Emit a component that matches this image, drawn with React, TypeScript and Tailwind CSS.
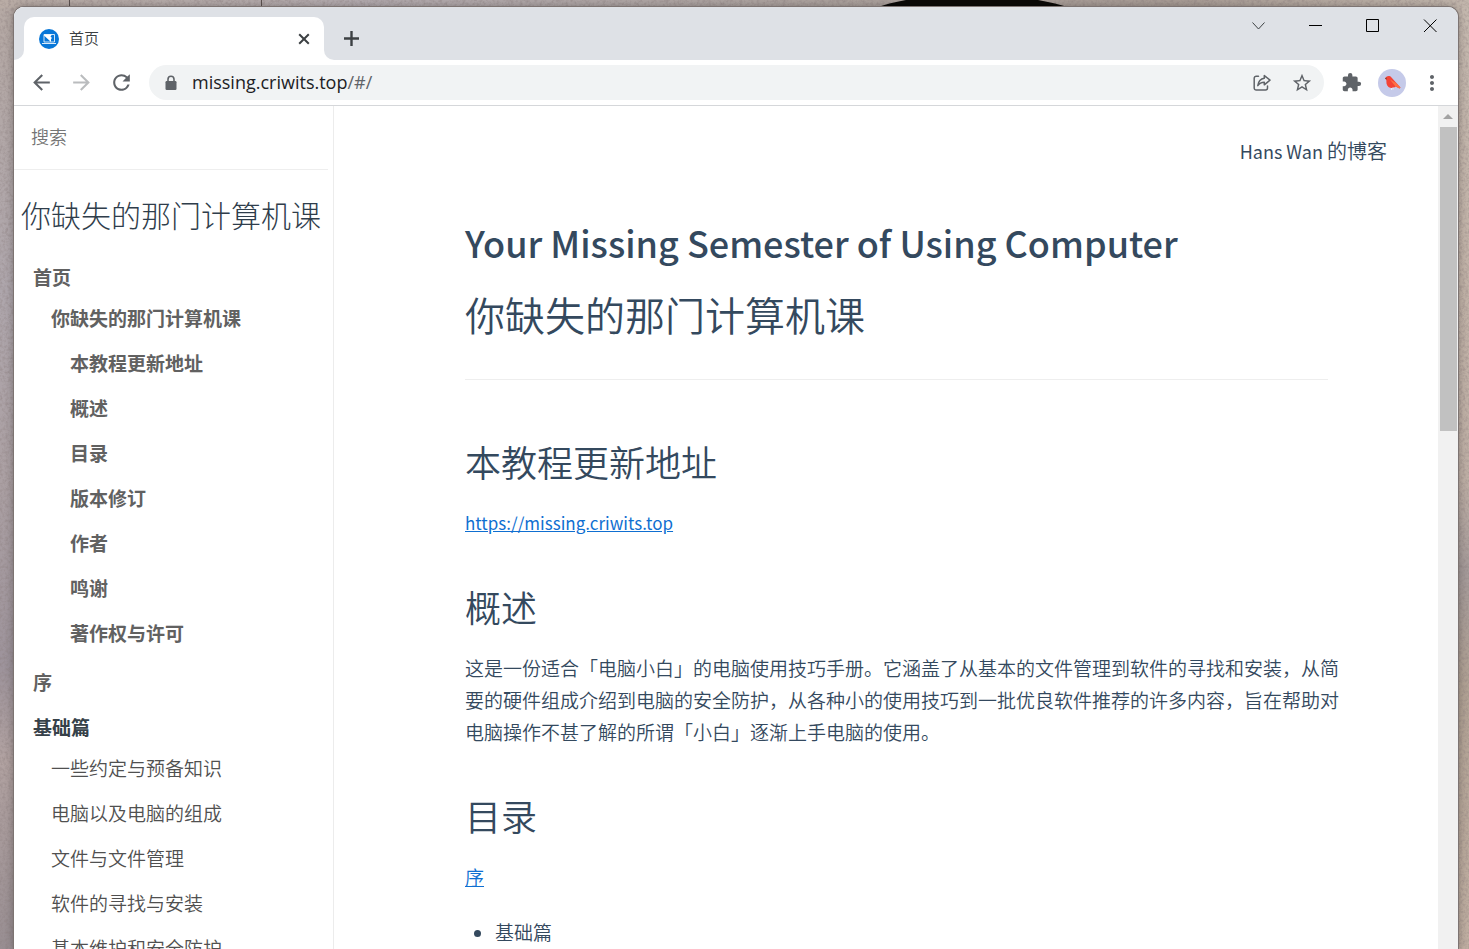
import React from "react";
import {
  MdArrowBack,
  MdArrowForward,
  MdExtension,
  MdMoreVert,
  MdRefresh,
  MdStarBorder,
} from "react-icons/md";

const homeSections = ["本教程更新地址", "概述", "目录", "版本修订", "作者", "鸣谢", "著作权与许可"];

const basics = [
  "一些约定与预备知识",
  "电脑以及电脑的组成",
  "文件与文件管理",
  "软件的寻找与安装",
  "基本维护和安全防护",
];

function Wallpaper() {
  return (
    <svg className="absolute inset-0 h-full w-full" preserveAspectRatio="none" viewBox="0 0 1469 949" aria-hidden="true">
      <defs>
        <linearGradient id="left" x1="0" y1="0" x2="0" y2="1">
          <stop offset="0" stopColor="#b5a9a4" />
          <stop offset="0.3" stopColor="#aea6ac" />
          <stop offset="0.5" stopColor="#aba0a3" />
          <stop offset="0.7" stopColor="#9d939b" />
          <stop offset="0.8" stopColor="#b1a2a1" />
          <stop offset="1" stopColor="#988e92" />
        </linearGradient>
        <linearGradient id="right" x1="0" y1="0" x2="0" y2="1">
          <stop offset="0" stopColor="#c5b9af" />
          <stop offset="0.3" stopColor="#c2b3a8" />
          <stop offset="0.5" stopColor="#beafa5" />
          <stop offset="0.6" stopColor="#a49a99" />
          <stop offset="0.72" stopColor="#b1a294" />
          <stop offset="1" stopColor="#c0afa2" />
        </linearGradient>
        <linearGradient id="top" x1="0" y1="0" x2="1" y2="0">
          <stop offset="0" stopColor="#b9aca5" />
          <stop offset="0.25" stopColor="#b3abaf" />
          <stop offset="0.55" stopColor="#ada39f" />
          <stop offset="0.8" stopColor="#a99d96" />
          <stop offset="1" stopColor="#c2b6ac" />
        </linearGradient>
        <filter id="grain" x="0" y="0" width="100%" height="100%">
          <feTurbulence type="fractalNoise" baseFrequency="0.35" numOctaves="3" seed="4" />
          <feColorMatrix values="0 0 0 0 0.25  0 0 0 0 0.2  0 0 0 0 0.2  0.9 0 0 0 -0.36" />
        </filter>
      </defs>
      <rect width="1469" height="949" fill="url(#top)" />
      <rect y="8" width="20" height="941" fill="url(#left)" />
      <rect x="1440" y="8" width="29" height="941" fill="url(#right)" />
      <rect width="1469" height="949" filter="url(#grain)" />
      <path d="M69.500 0v8M261.500 0v8" stroke="#5c5250" />
      <path d="M876 8q12-5 30-8h132q18 3 32 8z" fill="#0b0907" />
    </svg>
  );
}

function SiteIcon() {
  return (
    <svg width="20" height="20" viewBox="0 0 20 20" aria-hidden="true">
      <circle cx="10" cy="10" r="10" fill="#0877d8" />
      <path d="M5 5.500h10.500v7.500H5z" fill="none" stroke="#fff" strokeWidth="1" opacity="0.8" />
      <path d="M5 5.500h8l-1.500 2 1.500 1.500-1 1v3L5 6.500z" fill="#fff" />
      <path d="M3 14.500h14" stroke="#fff" strokeWidth="1" opacity="0.85" />
    </svg>
  );
}

function LockIcon() {
  return (
    <svg width="12" height="16" viewBox="0 0 12 16" className="shrink-0" aria-hidden="true">
      <path d="M3 7V4.300a3 3 0 0 1 6 0V7" fill="none" stroke="#5f6368" strokeWidth="1.600" />
      <rect x="0.500" y="6" width="11" height="9" rx="1.200" fill="#5f6368" />
    </svg>
  );
}

function ShareIcon() {
  return (
    <svg width="20" height="20" viewBox="0 0 20 20" fill="none" stroke="#5f6368" strokeWidth="1.500" strokeLinejoin="round" aria-hidden="true">
      <path d="M6.500 3.200H4.200A2 2 0 0 0 2.200 5.200V15a2 2 0 0 0 2 2H13.500a2 2 0 0 0 2-2v-2" strokeLinecap="round" />
      <path d="M12.300 2.500 18 7.200l-5.700 4.600V9.200C9.200 9.200 7.400 10.200 5.800 12.600 6.300 8.800 8.200 5.700 12.300 5.200Z" />
    </svg>
  );
}

function Avatar() {
  return (
    <svg width="28" height="28" viewBox="0 0 28 28" aria-hidden="true">
      <circle cx="14" cy="14" r="14" fill="#c5cae9" />
      <path d="M7 9.500C8 7 11.500 6 13.500 8.500L17.500 13 22.500 18.500 21.500 19.500 17.500 17.500C15 20 9.500 19.500 8.500 14.500L8.300 11Z" fill="#f44336" />
      <path d="M12 10.500 18 14 22.500 18.500 21.500 19.500 17 17Z" fill="#ff7043" />
      <path d="M7 9.600l1.500-1.200v2z" fill="#5d4037" />
      <path d="M13.500 19v2M15 18.500v2" stroke="#e8eaf6" />
    </svg>
  );
}

function TabStrip() {
  return (
    <div className="flex h-[53px] shrink-0 items-end bg-[#dee1e6]">
      <div className="flex w-[10px] items-end self-stretch bg-white">
        <div className="h-full w-full rounded-br-[10px] bg-[#dee1e6]" />
      </div>
      <div className="flex h-[43px] w-[300px] items-center rounded-t-[10px] bg-white pr-3 pl-[15px]">
        <SiteIcon />
        <span className="ml-[10px] flex-1 text-[15px] font-[350] text-[#3c4043]">首页</span>
        <button aria-label="关闭标签页" className="flex size-4 items-center justify-center">
          <svg width="12" height="12" viewBox="0 0 12 12" stroke="#3c4043" strokeWidth="2" aria-hidden="true">
            <path d="M1.200 1.200l9.600 9.600M10.800 1.200L1.200 10.800" />
          </svg>
        </button>
      </div>
      <div className="w-[10px] self-stretch bg-white">
        <div className="h-full w-full rounded-bl-[10px] bg-[#dee1e6]" />
      </div>
      <button aria-label="新标签页" className="mb-[14px] ml-[9px] flex size-4 items-center justify-center">
        <svg width="16" height="16" viewBox="0 0 16 16" stroke="#3c4043" strokeWidth="2.400" aria-hidden="true">
          <path d="M8.500 1v15M1 8.500h15" />
        </svg>
      </button>
      <div className="ml-auto flex self-start">
        <button aria-label="搜索标签页" className="flex h-[38px] w-[57px] items-center justify-center">
          <svg width="14" height="14" viewBox="0 0 14 14" fill="none" stroke="#3c4043" strokeWidth="1" aria-hidden="true">
            <path d="M.500 3.500l6 6.500 6-6.500" />
          </svg>
        </button>
        <button aria-label="最小化" className="flex h-[38px] w-[57px] items-center justify-center">
          <svg width="14" height="14" viewBox="0 0 14 14" stroke="#000" aria-hidden="true">
            <path d="M0 6.500h13" />
          </svg>
        </button>
        <button aria-label="最大化" className="flex h-[38px] w-[57px] items-center justify-center">
          <svg width="14" height="14" viewBox="0 0 14 14" fill="none" stroke="#000" aria-hidden="true">
            <path d="M.5.500h12v12H.500z" />
          </svg>
        </button>
        <button aria-label="关闭" className="flex h-[38px] w-[57px] items-center justify-center">
          <svg width="14" height="14" viewBox="0 0 14 14" stroke="#000" strokeWidth="1" aria-hidden="true">
            <path d="M1 .500l12.500 12.500M13.500.500L1 13" />
          </svg>
        </button>
      </div>
    </div>
  );
}

function Toolbar() {
  return (
    <div className="flex h-[46px] shrink-0 items-center border-b border-[#d5d7da] bg-white pr-[14px] pl-[15px] text-[#5f6368]">
      <div className="flex gap-[15px]">
        <button aria-label="后退"><MdArrowBack size={25} /></button>
        <button aria-label="前进" className="text-[#babcbe]"><MdArrowForward size={25} /></button>
        <button aria-label="重新加载"><MdRefresh size={25} /></button>
      </div>
      <div className="ml-[15px] flex h-[35px] min-w-0 flex-1 items-center rounded-full bg-[#f1f3f4] pr-[11px] pl-4">
        <LockIcon />
        <a href="#/" className="ml-[15px] min-w-0 flex-1 font-['Open_Sans','Noto_Sans',sans-serif] text-[18px] text-[#202124]">
          missing.criwits.top<span className="text-[#5f6368]">/#/</span>
        </a>
        <button aria-label="分享"><ShareIcon /></button>
        <button aria-label="为此标签页添加书签" className="ml-[19px]"><MdStarBorder size={22} /></button>
      </div>
      <button aria-label="扩展程序" className="ml-[17px]"><MdExtension size={21} /></button>
      <button aria-label="用户" className="ml-4"><Avatar /></button>
      <button aria-label="菜单" className="ml-[14px]"><MdMoreVert size={24} /></button>
    </div>
  );
}

function Sidebar() {
  return (
    <aside className="w-[320px] shrink-0 overflow-hidden border-r border-[#ececec]">
      <div className="mr-[5px] flex h-16 items-center border-b border-[#eeeeee] pb-[2px] pl-[17px]">
        <input
          type="search"
          aria-label="搜索"
          placeholder="搜索"
          className="w-full bg-transparent text-[18px] font-[350] outline-none placeholder:text-[#757575]"
        />
      </div>
      <h1 className="mt-[22px] mb-[18px] pl-[7px] text-[30px] leading-[44px] font-light whitespace-nowrap text-[#2f3d4b]">
        <a href="#/">你缺失的那门计算机课</a>
      </h1>
      <nav className="pl-[19px] text-[19px] leading-[45px] font-[350]">
        <ul>
          <li className="font-bold text-[#616161]">
            <a href="#/">首页</a>
            <ul className="-mt-1 mb-1 pl-[18px]">
              <li>
                <a href="#/top">你缺失的那门计算机课</a>
                <ul className="pl-[19px]">
                  {homeSections.map((title) => (
                    <li key={title}>
                      <a href={"#/" + title}>{title}</a>
                    </li>
                  ))}
                </ul>
              </li>
            </ul>
          </li>
          <li className="font-bold text-[#616161]">
            <a href="#/preface">序</a>
          </li>
          <li>
            <p className="font-bold text-[#364149]">基础篇</p>
            <ul className="-mt-1 mb-1 pl-[18px] text-[#505050]">
              {basics.map((title) => (
                <li key={title}>
                  <a href={"#/" + title}>{title}</a>
                </li>
              ))}
            </ul>
          </li>
        </ul>
      </nav>
    </aside>
  );
}

function Article() {
  return (
    <main className="min-w-0 flex-1 overflow-hidden font-[350] text-[#34495e]">
      <nav className="flex justify-end pt-[29px] pr-[51px] text-[20px] leading-8">
        <a href="#/blog">
          <span className="text-[18px] font-normal">Hans Wan </span>的博客
        </a>
      </nav>
      <article className="pt-[38px] pr-[110px] pl-[131px] text-[19px] leading-8">
        <h1 className="border-b border-[#eeeeee] pb-[29px] text-[40px] leading-[72px] whitespace-nowrap">
          <span className="text-[36px] font-medium">Your Missing Semester of Using Computer</span>
          <br />
          你缺失的那门计算机课
        </h1>
        <h2 className="mt-[57px] mb-[22px] text-[36px] leading-[48px]">本教程更新地址</h2>
        <p className="text-[17px]">
          <a href="https://missing.criwits.top" className="font-normal text-[#0f6fd1] underline">https://missing.criwits.top</a>
        </p>
        <h2 className="mt-[43px] mb-[22px] text-[36px] leading-[48px]">概述</h2>
        <p className="whitespace-nowrap">
          这是一份适合「电脑小白」的电脑使用技巧手册。它涵盖了从基本的文件管理到软件的寻找和安装，从简
          <br />
          要的硬件组成介绍到电脑的安全防护，从各种小的使用技巧到一批优良软件推荐的许多内容，旨在帮助对
          <br />
          电脑操作不甚了解的所谓「小白」逐渐上手电脑的使用。
        </p>
        <h2 className="mt-[43px] mb-[22px] text-[36px] leading-[48px]">目录</h2>
        <p>
          <a href="#/preface" className="text-[#0f6fd1] underline">序</a>
        </p>
        <ul className="mt-[23px] list-disc pl-[30px]">
          <li>基础篇</li>
        </ul>
      </article>
    </main>
  );
}

function Scrollbar() {
  return (
    <div className="flex w-5 shrink-0 flex-col items-center bg-[#f1f1f1]" aria-hidden="true">
      <div className="flex h-[21px] items-center">
        <svg width="10" height="6" viewBox="0 0 10 6" fill="#a3a3a3">
          <path d="M5 0l5 5H0z" />
        </svg>
      </div>
      <div className="h-[304px] w-[17px] bg-[#c1c1c1]" />
    </div>
  );
}

export default function App() {
  return (
    <div className="relative h-screen overflow-hidden bg-[#a89d9a] font-['Noto_Sans_CJK_SC',sans-serif]">
      <Wallpaper />
      <div className="relative flex h-full flex-col pt-[7px] pr-[11px] pl-[14px]">
        <div className="flex min-h-0 flex-1 flex-col overflow-hidden rounded-t-[10px] bg-white shadow-[0_0_0_1px_#7d7472,0_0_10px_rgba(0,0,0,0.35)]">
          <TabStrip />
          <Toolbar />
          <div className="flex min-h-0 flex-1">
            <Sidebar />
            <Article />
            <Scrollbar />
          </div>
        </div>
      </div>
    </div>
  );
}
